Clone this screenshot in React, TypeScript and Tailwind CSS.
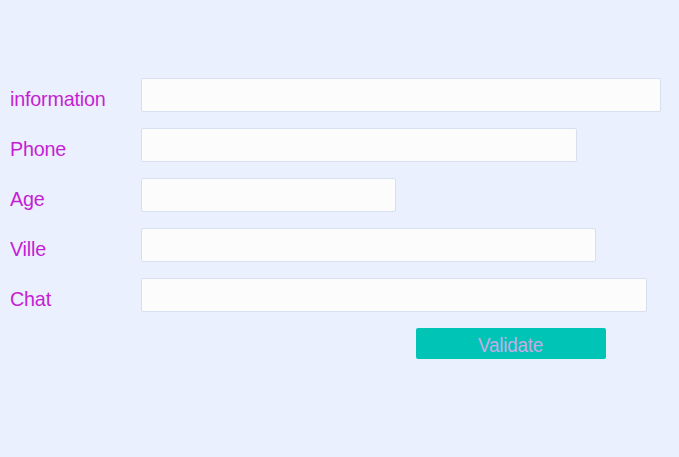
import React from 'react'

const fields = [
  { label: 'information', width: 'w-[520px]' },
  { label: 'Phone', width: 'w-[436px]' },
  { label: 'Age', width: 'w-[255px]' },
  { label: 'Ville', width: 'w-[455px]' },
  { label: 'Chat', width: 'w-[506px]' },
]

export default function App() {
  return (
    <div className="min-h-[457px] bg-[#ebf0fe] pt-[78px] pl-[10px] font-['Liberation_Sans',Arial,sans-serif]">
      <form className="flex flex-col gap-4" onSubmit={e => e.preventDefault()}>
        {fields.map(f => (
          <div key={f.label} className="flex h-[34px]">
            <div className="w-[131px] pt-[10px] leading-none">
              <label className="inline-block origin-left scale-x-[0.94] text-[21px] leading-none text-[#c41fd4] tracking-[-0.2px]">
                {f.label}
              </label>
            </div>
            <input
              type="text"
              className={`${f.width} h-[34px] rounded-[2px] border border-[#d8e0ef] bg-[#fcfcfd] outline-none`}
            />
          </div>
        ))}
        <div className="flex pl-[406px]">
          <button
            type="submit"
            className="w-[190px] h-[31px] pt-[3px] rounded-[2px] bg-[#00c5b6] text-[20px] leading-none text-[#c9a9e6]"
          >
            <span className="inline-block scale-x-[0.94] tracking-[-0.2px]">Validate</span>
          </button>
        </div>
      </form>
    </div>
  )
}
